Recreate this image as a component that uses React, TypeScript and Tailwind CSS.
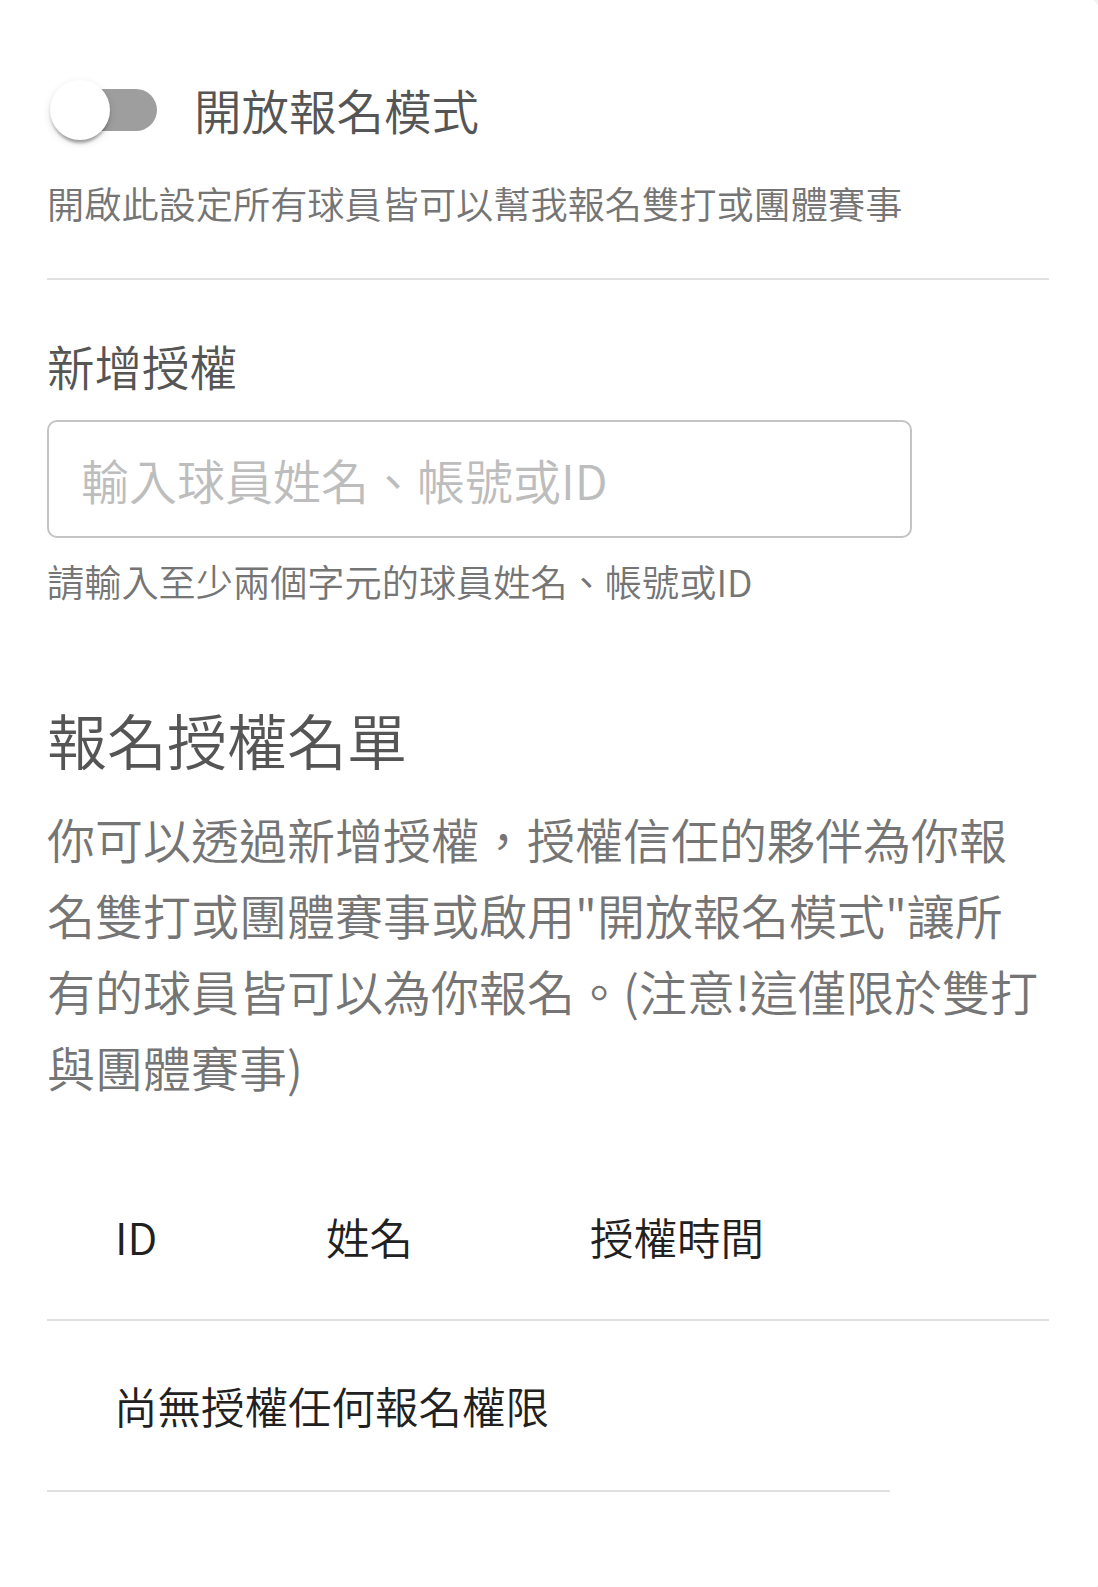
import { useState } from "react";

const font = "font-['Noto_Sans_CJK_TC','Noto_Sans',sans-serif] font-[350]";

function Toggle({ on, onChange }: { on: boolean; onChange: (v: boolean) => void }) {
  return (
    <button
      type="button"
      role="switch"
      aria-checked={on}
      onClick={() => onChange(!on)}
      className="relative w-[110px] h-[60px] shrink-0 cursor-pointer"
    >
      <span
        className={`absolute right-0 top-[9px] w-[102px] h-[42px] rounded-full ${
          on ? "bg-[#90caf9]" : "bg-[#9e9e9e]"
        }`}
      />
      <span
        className={`absolute top-0 w-[60px] h-[60px] rounded-full shadow-[0_6px_3px_-3px_rgba(0,0,0,0.2),0_3px_3px_0_rgba(0,0,0,0.14),0_3px_9px_0_rgba(0,0,0,0.12)] transition-all ${
          on ? "left-[50px] bg-[#1976d2]" : "left-[3px] bg-white"
        }`}
      />
    </button>
  );
}

export default function App() {
  const [openMode, setOpenMode] = useState(false);
  const [query, setQuery] = useState("");

  return (
    <div className={`w-full h-[1587px] overflow-hidden bg-[#f2f2f2] ${font}`}>
      <div className="ml-[-20px] mr-[-2px] mt-[-3px] h-[1596px] rounded-[16px] bg-white pl-[67px] pr-[51px] pt-[83px]">
        {/* 開放報名模式 */}
        <div className="flex items-center">
          <Toggle on={openMode} onChange={setOpenMode} />
          <span className="ml-[37px] text-[47.5px] leading-[60px] text-[#555555]">
            開放報名模式
          </span>
        </div>
        <p className="mt-[35px] text-[37.2px] leading-[56px] text-[#757575]">
          開啟此設定所有球員皆可以幫我報名雙打或團體賽事
        </p>

        <div className="mt-[47px] h-[2px] bg-[#e0e0e0]" />

        {/* 新增授權 */}
        <h3 className="mt-[58px] text-[47.5px] leading-[56px] text-[#555555]">新增授權</h3>
        <input
          value={query}
          onChange={(e) => setQuery(e.target.value)}
          placeholder="輸入球員姓名、帳號或ID"
          className="mt-[26px] block w-[865px] h-[118px] rounded-[10px] border-2 border-[#c4c4c4] pl-[32px] pr-[32px] text-[48px] font-[350] text-[#333333] placeholder:text-[#bdbdbd] outline-none focus:border-[#1976d2]"
        />
        <p className="mt-[18px] text-[37.2px] leading-[50px] text-[#757575]">
          請輸入至少兩個字元的球員姓名、帳號或ID
        </p>

        {/* 報名授權名單 */}
        <h2 className="mt-[97px] text-[60px] leading-[72px] text-[#555555]">報名授權名單</h2>
        <p className="mt-[25px] text-[48px] leading-[76px] text-[#757575]">
          你可以透過新增授權，授權信任的夥伴為你報名雙打或團體賽事或啟用"開放報名模式"讓所有的球員皆可以為你報名。(注意!這僅限於雙打與團體賽事)
        </p>

        <table className="mt-[51px] w-[1002px] table-fixed border-collapse text-[43.5px] text-[#212121]">
          <colgroup>
            <col className="w-[212px]" />
            <col className="w-[264px]" />
            <col className="w-[367px]" />
            <col className="w-[159px]" />
          </colgroup>
          <thead>
            <tr>
              <th className="h-[165px] border-b-2 border-[#e0e0e0] pl-[68px] text-left font-[350]">ID</th>
              <th className="h-[165px] border-b-2 border-[#e0e0e0] pl-[67px] text-left font-[350]">姓名</th>
              <th className="h-[165px] border-b-2 border-[#e0e0e0] pl-[67px] text-left font-[350] whitespace-nowrap">授權時間</th>
              <th className="h-[165px] border-b-2 border-[#e0e0e0]" />
            </tr>
          </thead>
          <tbody>
            <tr>
              <td colSpan={3} className="h-[171px] border-b-2 border-[#e0e0e0] pl-[67px] whitespace-nowrap">
                尚無授權任何報名權限
              </td>
              <td />
            </tr>
          </tbody>
        </table>
      </div>
    </div>
  );
}
